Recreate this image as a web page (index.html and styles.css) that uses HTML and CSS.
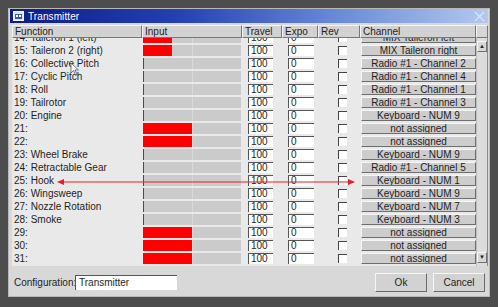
FILE: index.html
```html
<!DOCTYPE html>
<html lang="en">
<head>
    <meta charset="UTF-8">
    <title>Transmitter</title>
    <link rel="stylesheet" href="styles.css">
</head>
<body>
    <div class="desk">
        <div class="window">
            <div class="titlebar">
                <svg class="app-icon" width="11" height="10" viewBox="0 0 11 10">
                    <rect x="0.5" y="0.5" width="10" height="9" fill="#dfe6f5" stroke="#ffffff"/>
                    <rect x="2" y="3" width="7" height="5" fill="#3a58b0"/>
                    <rect x="3" y="4" width="2" height="2" fill="#ffffff"/>
                    <rect x="6" y="4" width="2" height="2" fill="#ffffff"/>
                </svg>
                <span class="title">Transmitter</span>
                <svg class="close" width="11" height="11" viewBox="0 0 11 11">
                    <path d="M1 10 L10 1 M1 1 L10 10" stroke="#dbe6f8" stroke-width="1.2"/>
                </svg>
            </div>

            <div class="panel">
                <div class="grid-head">
                    <div class="hcell">Function</div>
                    <div class="hcell">Input</div>
                    <div class="hcell">Travel</div>
                    <div class="hcell">Expo</div>
                    <div class="hcell">Rev</div>
                    <div class="hcell">Channel</div>
                    <div class="hcell blank"></div>
                </div>

                <div class="view">
                    <div class="rows">
                        <div class="row first">
                            <div class="fn">14: Taileron 1 (left)</div>
                            <div class="inp"><div class="bar"><div class="fill" style="width:29px"></div></div></div>
                            <div class="trv"><span class="field">100</span></div>
                            <div class="exp"><span class="field">0</span></div>
                            <div class="rev"><span class="check"></span></div>
                            <div class="chn"><span class="btn">MIX Taileron left</span></div>
                        </div>
                        <div class="row">
                            <div class="fn">15: Taileron 2 (right)</div>
                            <div class="inp"><div class="bar"><div class="fill" style="width:29px"></div></div></div>
                            <div class="trv"><span class="field">100</span></div>
                            <div class="exp"><span class="field">0</span></div>
                            <div class="rev"><span class="check"></span></div>
                            <div class="chn"><span class="btn">MIX Taileron right</span></div>
                        </div>
                        <div class="row">
                            <div class="fn">16: Collective Pitch</div>
                            <div class="inp"><div class="bar"><div class="fill" style="width:1px"></div></div></div>
                            <div class="trv"><span class="field">100</span></div>
                            <div class="exp"><span class="field">0</span></div>
                            <div class="rev"><span class="check"></span></div>
                            <div class="chn"><span class="btn">Radio #1 - Channel 2</span></div>
                        </div>
                        <div class="row">
                            <div class="fn">17: Cyclic Pitch</div>
                            <div class="inp"><div class="bar"><div class="fill" style="width:1px"></div></div></div>
                            <div class="trv"><span class="field">100</span></div>
                            <div class="exp"><span class="field">0</span></div>
                            <div class="rev"><span class="check"></span></div>
                            <div class="chn"><span class="btn">Radio #1 - Channel 4</span></div>
                        </div>
                        <div class="row">
                            <div class="fn">18: Roll</div>
                            <div class="inp"><div class="bar"><div class="fill" style="width:1px"></div></div></div>
                            <div class="trv"><span class="field">100</span></div>
                            <div class="exp"><span class="field">0</span></div>
                            <div class="rev"><span class="check"></span></div>
                            <div class="chn"><span class="btn">Radio #1 - Channel 1</span></div>
                        </div>
                        <div class="row">
                            <div class="fn">19: Tailrotor</div>
                            <div class="inp"><div class="bar"><div class="fill" style="width:1px"></div></div></div>
                            <div class="trv"><span class="field">100</span></div>
                            <div class="exp"><span class="field">0</span></div>
                            <div class="rev"><span class="check"></span></div>
                            <div class="chn"><span class="btn">Radio #1 - Channel 3</span></div>
                        </div>
                        <div class="row">
                            <div class="fn">20: Engine</div>
                            <div class="inp"><div class="bar"><div class="fill" style="width:1px"></div></div></div>
                            <div class="trv"><span class="field">100</span></div>
                            <div class="exp"><span class="field">0</span></div>
                            <div class="rev"><span class="check"></span></div>
                            <div class="chn"><span class="btn">Keyboard - NUM 9</span></div>
                        </div>
                        <div class="row">
                            <div class="fn">21:</div>
                            <div class="inp"><div class="bar"><div class="fill" style="width:49px"></div></div></div>
                            <div class="trv"><span class="field">100</span></div>
                            <div class="exp"><span class="field">0</span></div>
                            <div class="rev"><span class="check"></span></div>
                            <div class="chn"><span class="btn">not assigned</span></div>
                        </div>
                        <div class="row">
                            <div class="fn">22:</div>
                            <div class="inp"><div class="bar"><div class="fill" style="width:49px"></div></div></div>
                            <div class="trv"><span class="field">100</span></div>
                            <div class="exp"><span class="field">0</span></div>
                            <div class="rev"><span class="check"></span></div>
                            <div class="chn"><span class="btn">not assigned</span></div>
                        </div>
                        <div class="row">
                            <div class="fn">23: Wheel Brake</div>
                            <div class="inp"><div class="bar"><div class="fill" style="width:1px"></div></div></div>
                            <div class="trv"><span class="field">100</span></div>
                            <div class="exp"><span class="field">0</span></div>
                            <div class="rev"><span class="check"></span></div>
                            <div class="chn"><span class="btn">Keyboard - NUM 9</span></div>
                        </div>
                        <div class="row">
                            <div class="fn">24: Retractable Gear</div>
                            <div class="inp"><div class="bar"><div class="fill" style="width:1px"></div></div></div>
                            <div class="trv"><span class="field">100</span></div>
                            <div class="exp"><span class="field">0</span></div>
                            <div class="rev"><span class="check"></span></div>
                            <div class="chn"><span class="btn">Radio #1 - Channel 5</span></div>
                        </div>
                        <div class="row">
                            <div class="fn">25: Hook</div>
                            <div class="inp"><div class="bar"><div class="fill" style="width:1px"></div></div></div>
                            <div class="trv"><span class="field">100</span></div>
                            <div class="exp"><span class="field">0</span></div>
                            <div class="rev"><span class="check"></span></div>
                            <div class="chn"><span class="btn">Keyboard - NUM 1</span></div>
                        </div>
                        <div class="row">
                            <div class="fn">26: Wingsweep</div>
                            <div class="inp"><div class="bar"><div class="fill" style="width:1px"></div></div></div>
                            <div class="trv"><span class="field">100</span></div>
                            <div class="exp"><span class="field">0</span></div>
                            <div class="rev"><span class="check"></span></div>
                            <div class="chn"><span class="btn">Keyboard - NUM 9</span></div>
                        </div>
                        <div class="row">
                            <div class="fn">27: Nozzle Rotation</div>
                            <div class="inp"><div class="bar"><div class="fill" style="width:1px"></div></div></div>
                            <div class="trv"><span class="field">100</span></div>
                            <div class="exp"><span class="field">0</span></div>
                            <div class="rev"><span class="check"></span></div>
                            <div class="chn"><span class="btn">Keyboard - NUM 7</span></div>
                        </div>
                        <div class="row">
                            <div class="fn">28: Smoke</div>
                            <div class="inp"><div class="bar"><div class="fill" style="width:1px"></div></div></div>
                            <div class="trv"><span class="field">100</span></div>
                            <div class="exp"><span class="field">0</span></div>
                            <div class="rev"><span class="check"></span></div>
                            <div class="chn"><span class="btn">Keyboard - NUM 3</span></div>
                        </div>
                        <div class="row">
                            <div class="fn">29:</div>
                            <div class="inp"><div class="bar"><div class="fill" style="width:49px"></div></div></div>
                            <div class="trv"><span class="field">100</span></div>
                            <div class="exp"><span class="field">0</span></div>
                            <div class="rev"><span class="check"></span></div>
                            <div class="chn"><span class="btn">not assigned</span></div>
                        </div>
                        <div class="row">
                            <div class="fn">30:</div>
                            <div class="inp"><div class="bar"><div class="fill" style="width:49px"></div></div></div>
                            <div class="trv"><span class="field">100</span></div>
                            <div class="exp"><span class="field">0</span></div>
                            <div class="rev"><span class="check"></span></div>
                            <div class="chn"><span class="btn">not assigned</span></div>
                        </div>
                        <div class="row">
                            <div class="fn">31:</div>
                            <div class="inp"><div class="bar"><div class="fill" style="width:49px"></div></div></div>
                            <div class="trv"><span class="field">100</span></div>
                            <div class="exp"><span class="field">0</span></div>
                            <div class="rev"><span class="check"></span></div>
                            <div class="chn"><span class="btn">not assigned</span></div>
                        </div>
                    </div>

                    <div class="scrollbar">
                        <div class="arrow">&#9650;</div>
                        <div class="track"></div>
                        <div class="arrow">&#9660;</div>
                    </div>
                </div>

                <div class="footer">
                    <label class="cfg-label">Configuration:</label>
                    <span class="cfg-field">Transmitter</span>
                    <div class="actions">
                        <span class="push">Ok</span>
                        <span class="push">Cancel</span>
                    </div>
                </div>
            </div>
        </div>

        <!-- annotation drawn over the screenshot -->
        <svg class="annot" width="498" height="307" viewBox="0 0 498 307">
            <line x1="62" y1="182" x2="350" y2="182" stroke="#e0202a" stroke-width="1"/>
            <path d="M57 182 L64 179 L64 185 Z" fill="#e0202a"/>
            <path d="M355 182 L348 179 L348 185 Z" fill="#e0202a"/>
        </svg>
        <svg class="cursor" width="10" height="14" viewBox="0 0 10 14">
            <path d="M1 1 L1 11 L3.5 8.5 L5.5 13 L7 12.3 L5 8 L8.5 8 Z" fill="#ffffff" stroke="#555" stroke-width="0.8"/>
        </svg>
    </div>
</body>
</html>
```

FILE: styles.css
```css
* { box-sizing: border-box; }
body {
    margin: 0;
    font-family: "Liberation Sans", Arial, sans-serif;
    font-size: 10px;
    color: #1e1e1e;
}
.desk {
    position: relative;
    width: 498px;
    height: 307px;
    background: #4d4d4d;
    padding: 8px 8px 0 8px;
    overflow: hidden;
}
.window {
    width: 482px;
    height: 289px;
    background: #d8d8d8;
    border: 1px solid #b8b8b8;
    display: flex;
    flex-direction: column;
}
.titlebar {
    height: 15px;
    margin: 0 1px;
    display: flex;
    align-items: center;
    gap: 4px;
    padding: 0 3px 0 3px;
    background: linear-gradient(to right, #0d1c86 0%, #2440b4 35%, #6c8ed8 70%, #b4c8ee 100%);
    color: #ffffff;
}
.title {
    flex: 1;
    font-size: 10px;
    letter-spacing: 0.1px;
}
.panel {
    flex: 1;
    display: flex;
    flex-direction: column;
    padding: 2px 1px 0 3px;
}
.grid-head {
    display: grid;
    grid-template-columns: 130px 100px 40px 36px 42px 116px 12px;
    height: 13px;
}
.hcell {
    background: #d2d2d2;
    border: 1px solid;
    border-color: #f4f4f4 #777 #777 #f4f4f4;
    padding: 0 2px;
    line-height: 11px;
    white-space: nowrap;
}
.hcell.blank {
    background: #d6d6d6;
}
.view {
    display: flex;
    height: 228px;
    overflow: hidden;
    background: #e9e9e9;
}
.rows {
    width: 464px;
    overflow: hidden;
}
.row {
    display: grid;
    grid-template-columns: 130px 100px 40px 36px 42px 116px;
    height: 13px;
    align-items: center;
}
.row.first {
    margin-top: -7px;
}
.fn {
    padding-left: 2px;
    white-space: nowrap;
    line-height: 13px;
}
.bar {
    margin-left: 1px;
    width: 98px;
    height: 11px;
    background: linear-gradient(to right, #cbcbcb 49px, #d8d8d8 49px, #d8d8d8 50px, #cbcbcb 50px);
}
.fill {
    height: 11px;
    background: #ff0000;
}
.trv, .exp {
    padding-left: 6px;
}
.field {
    display: block;
    height: 11px;
    width: 25px;
    background: #ffffff;
    border-top: 1px solid #555;
    border-left: 1px solid #555;
    padding-left: 2px;
    line-height: 10px;
}
.exp .field {
    width: 26px;
}
.rev {
    padding-left: 20px;
}
.check {
    display: block;
    width: 9px;
    height: 9px;
    background: #ffffff;
    border-top: 1px solid #444;
    border-left: 1px solid #444;
}
.chn {
    padding-left: 1px;
}
.btn {
    display: block;
    height: 11px;
    width: 115px;
    background: #cdcdcd;
    border: 1px solid;
    border-color: #f6f6f6 #6e6e6e #6e6e6e #f6f6f6;
    text-align: center;
    line-height: 9px;
    white-space: nowrap;
    overflow: hidden;
}
.scrollbar {
    width: 12px;
    display: flex;
    flex-direction: column;
    background: #dcdcdc;
    border-left: 1px solid #bdbdbd;
    border-right: 1px solid #8a8a8a;
}
.arrow {
    height: 11px;
    margin-top: 3px;
    background: #d8d8d8;
    border: 1px solid;
    border-color: #f6f6f6 #707070 #707070 #f6f6f6;
    font-size: 6px;
    line-height: 9px;
    text-align: center;
    color: #222;
}
.arrow:last-child {
    margin: 0 0 3px 0;
}
.track {
    flex: 1;
}
.footer {
    display: flex;
    align-items: center;
    height: 30px;
    padding: 2px 3px 0 0;
}
.cfg-label {
    padding-left: 2px;
    width: 63px;
}
.cfg-field {
    width: 102px;
    height: 15px;
    background: #ffffff;
    border-top: 1px solid #555;
    border-left: 1px solid #555;
    padding-left: 3px;
    line-height: 13px;
}
.actions {
    margin-left: auto;
    display: flex;
    gap: 6px;
}
.push {
    width: 52px;
    height: 19px;
    background: #d2d2d2;
    border: 1px solid;
    border-color: #f6f6f6 #6a6a6a #6a6a6a #f6f6f6;
    text-align: center;
    line-height: 17px;
}
.annot {
    position: absolute;
    left: 0;
    top: 0;
    pointer-events: none;
}
.cursor {
    position: absolute;
    left: 70px;
    top: 62px;
}
```
